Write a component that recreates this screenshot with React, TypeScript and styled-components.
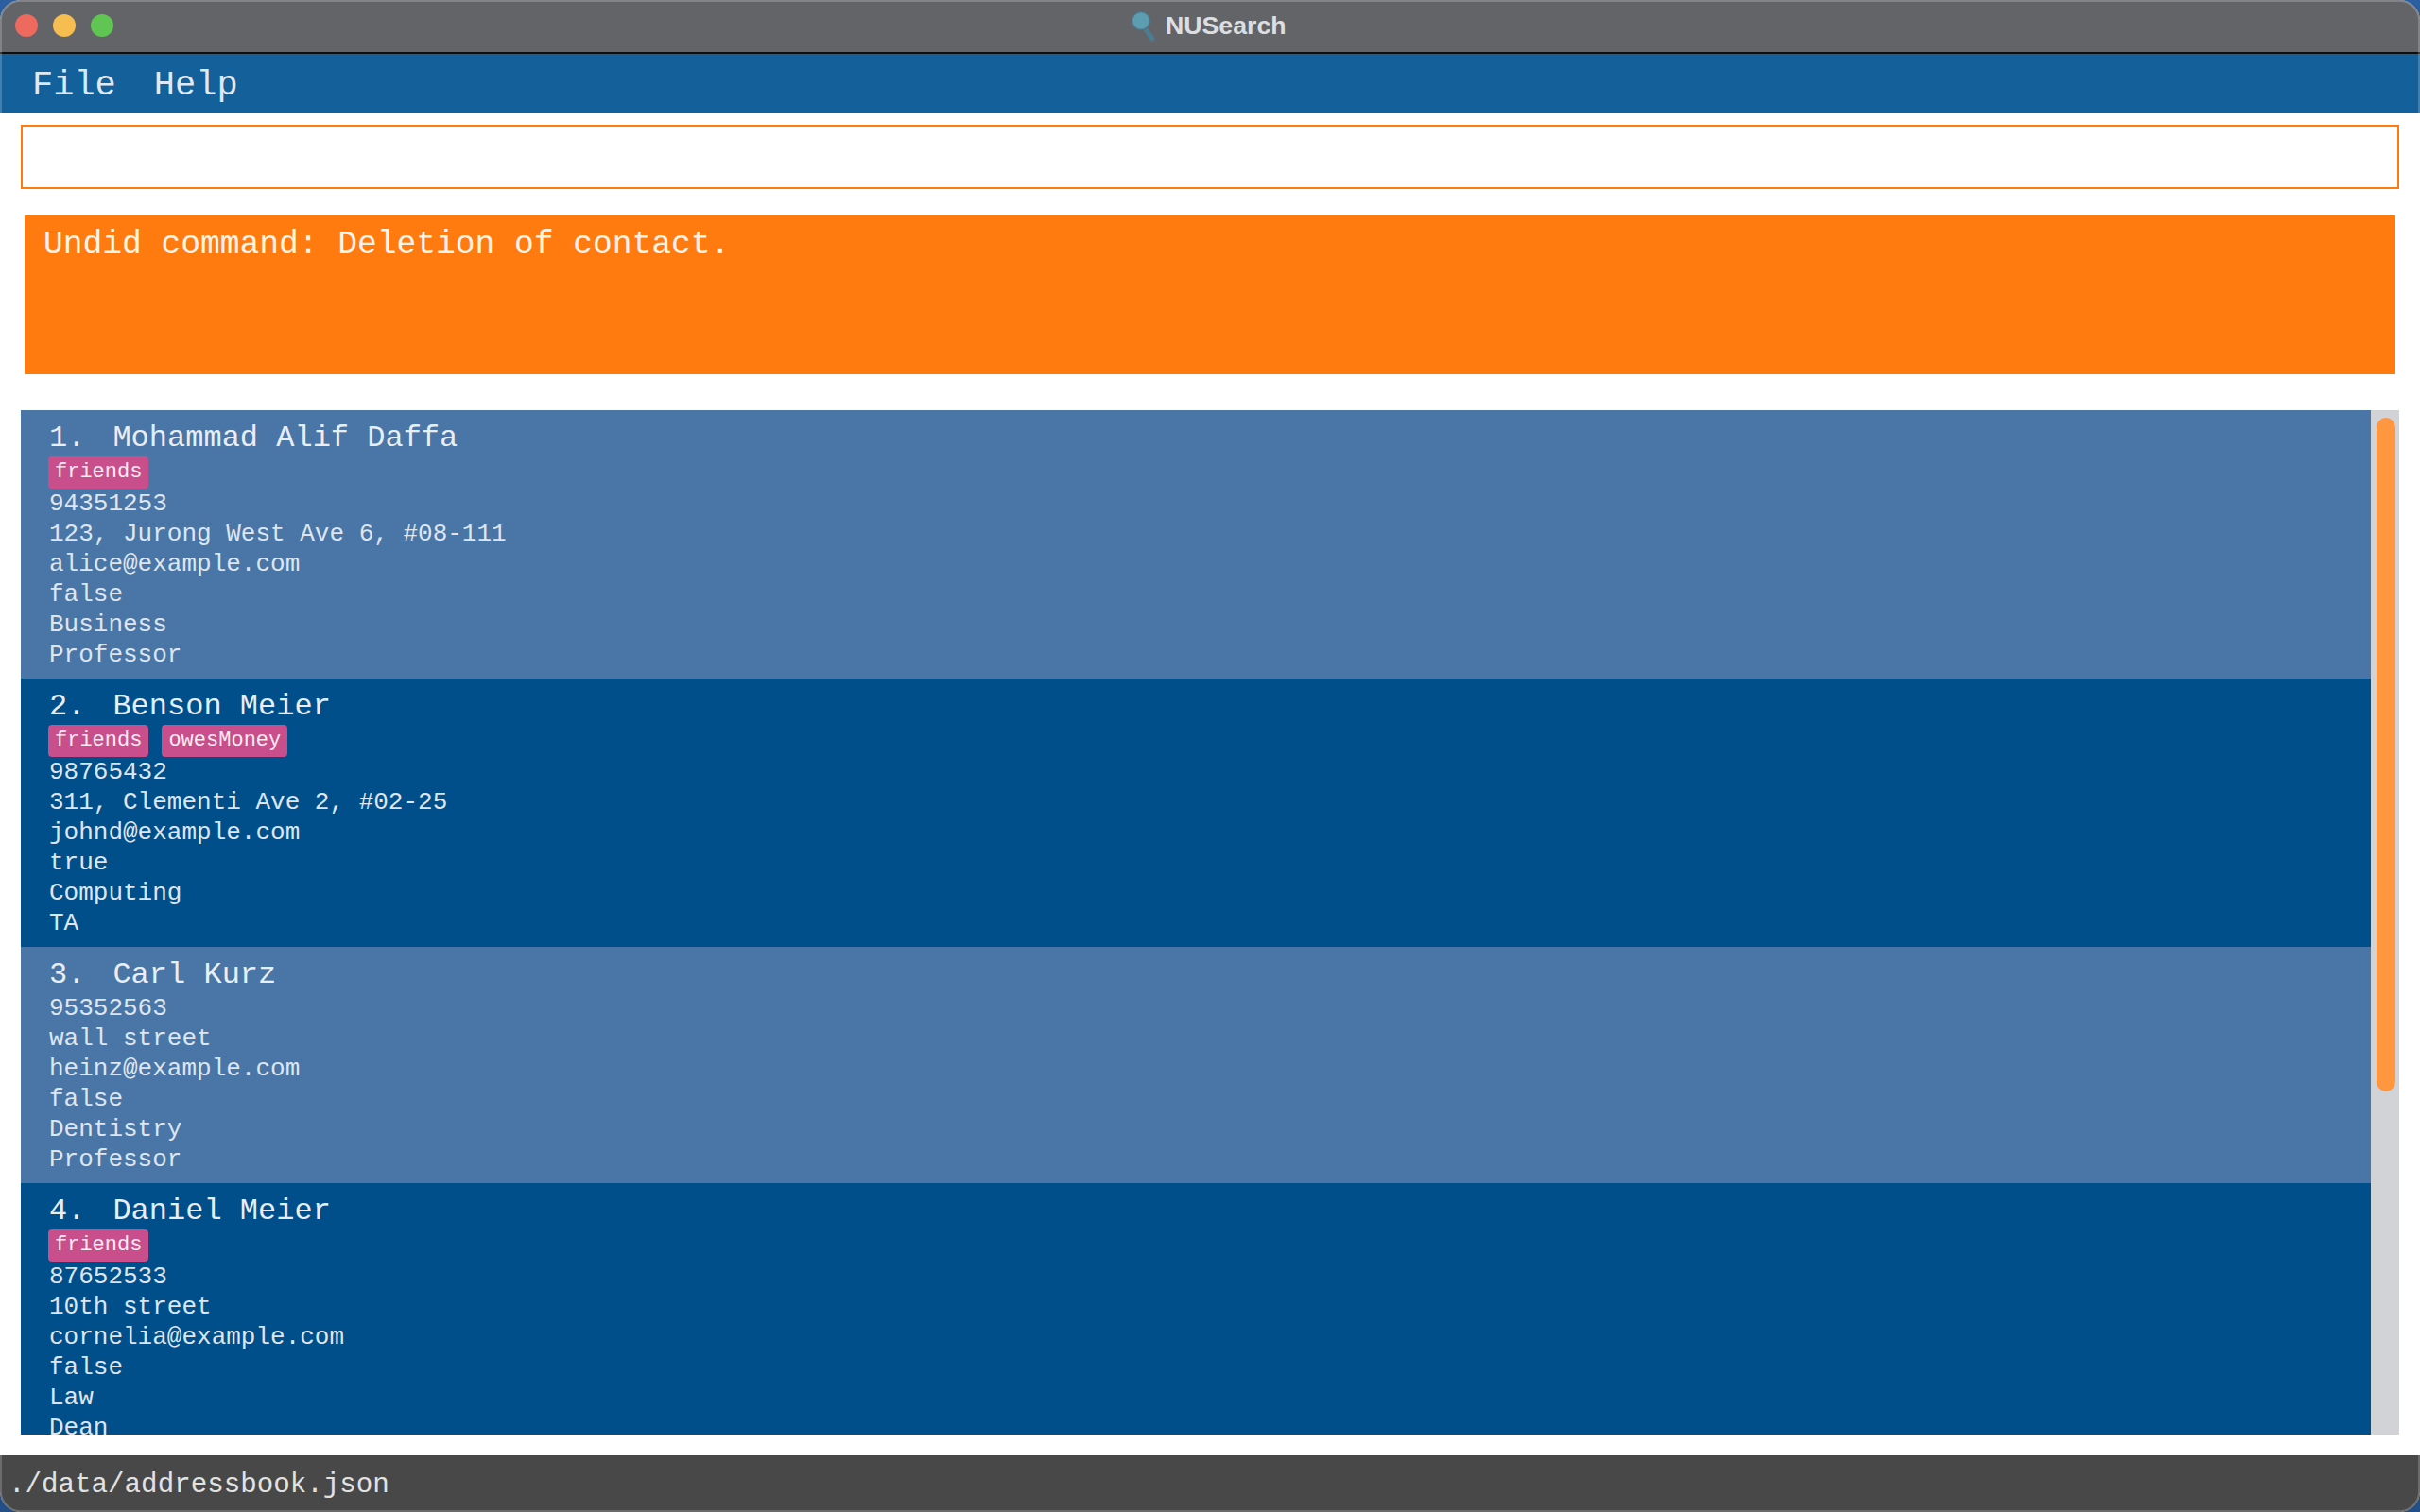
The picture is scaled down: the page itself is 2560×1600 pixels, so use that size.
import React from "react";
import styled, { createGlobalStyle } from "styled-components";

const Global = createGlobalStyle`
  html, body { margin: 0; padding: 0; background: #2a5c9e; }
  * { box-sizing: border-box; }
`;

const mono = `"Liberation Mono", "Courier New", monospace`;

const Desktop = styled.div`
  width: 2560px;
  height: 1600px;
  background: linear-gradient(180deg, #2b5f9f, #234f86);
`;

const Window = styled.div`
  position: relative;
  width: 2560px;
  height: 1600px;
  border-radius: 22px;
  overflow: hidden;
  display: flex;
  flex-direction: column;
  background: #fff;
  font-family: ${mono};
  &::after {
    content: "";
    position: absolute;
    inset: 0;
    border-radius: 22px;
    border: 2px solid rgba(255, 255, 255, 0.2);
    pointer-events: none;
  }
`;

const TitleBar = styled.div`
  flex: 0 0 57px;
  display: flex;
  align-items: center;
  padding: 0 16px 1px;
  background: #626468;
  border-bottom: 2px solid #0c0f12;
  position: relative;
`;

const Lights = styled.div`
  display: flex;
  gap: 16px;
`;

const Light = styled.span<{ $c: string }>`
  width: 24px;
  height: 24px;
  border-radius: 50%;
  background: ${(p) => p.$c};
`;

const TitleGroup = styled.div`
  position: absolute;
  left: 1196px;
  top: 9px;
  display: flex;
  align-items: center;
  gap: 9px;
`;

const TitleText = styled.span`
  font: 700 26.7px "Liberation Sans", Arial, sans-serif;
  color: #dcdee2;
`;

const MenuBar = styled.div`
  flex: 0 0 63px;
  display: flex;
  align-items: center;
  gap: 40px;
  padding: 2px 0 0 34px;
  background: #13609a;
  color: #dfe9f3;
  font-size: 37px;
`;

const Content = styled.div`
  flex: 1;
  min-height: 0;
  display: flex;
  flex-direction: column;
  padding: 12px 22px 22px;
`;

const CommandBox = styled.div`
  flex: 0 0 68px;
  border: 2px solid #ff7b0f;
  background: #fff;
`;

const ResultBox = styled.div`
  flex: 0 0 168px;
  margin: 28px 4px 38px;
  padding: 10px 20px;
  background: #ff7b0f;
  color: #fff3e8;
  font-size: 34.6px;
  line-height: 42px;
`;

const ListArea = styled.div`
  flex: 1;
  min-height: 0;
  display: flex;
`;

const Rows = styled.div`
  flex: 1;
  min-width: 0;
  overflow: hidden;
`;

const Row = styled.div<{ $odd: boolean }>`
  padding: 0 30px 10px;
  background: ${(p) => (p.$odd ? "#4a75a7" : "#004f8a")};
  color: #dde6ef;
`;

const NameLine = styled.div`
  height: 48px;
  padding-top: 10px;
  display: flex;
  align-items: center;
  gap: 29px;
  font-size: 32px;
  color: #e8eef4;
`;

const Tags = styled.div`
  display: flex;
  gap: 15px;
  margin: 1px 0 -1px;
`;

const Tag = styled.span`
  height: 34px;
  margin-left: -1px;
  padding: 0 7px;
  border-radius: 4px;
  background: #c84f8c;
  color: #fbeaf2;
  font-size: 22px;
  line-height: 34px;
`;

const Detail = styled.div`
  height: 32px;
  font-size: 26px;
  line-height: 34px;
`;

const Track = styled.div`
  flex: 0 0 30px;
  padding: 8px 4px 0 6px;
  background: #d2d3d7;
`;

const Thumb = styled.div`
  height: 713px;
  border-radius: 10px;
  background: #ff9640;
`;

const StatusBar = styled.div`
  flex: 0 0 60px;
  display: flex;
  align-items: center;
  padding: 3px 9px 0;
  background: #484848;
  color: #e2e2e2;
  font-size: 29.2px;
`;

const contacts = [
  { name: "Mohammad Alif Daffa", tags: ["friends"], lines: ["94351253", "123, Jurong West Ave 6, #08-111", "alice@example.com", "false", "Business", "Professor"] },
  { name: "Benson Meier", tags: ["friends", "owesMoney"], lines: ["98765432", "311, Clementi Ave 2, #02-25", "johnd@example.com", "true", "Computing", "TA"] },
  { name: "Carl Kurz", tags: [], lines: ["95352563", "wall street", "heinz@example.com", "false", "Dentistry", "Professor"] },
  { name: "Daniel Meier", tags: ["friends"], lines: ["87652533", "10th street", "cornelia@example.com", "false", "Law", "Dean"] },
];

const Magnifier = () => (
  <svg width="28" height="36" viewBox="0 0 28 36">
    <line x1="16" y1="22" x2="23" y2="32" stroke="#4c7c90" strokeWidth="5" strokeLinecap="round" />
    <circle cx="11" cy="13" r="9.5" fill="#5c9db2" stroke="#4f7486" strokeWidth="1.5" />
  </svg>
);

export default function App() {
  return (
    <Desktop>
      <Global />
      <Window>
        <TitleBar>
          <Lights>
            <Light $c="#ee6a5f" />
            <Light $c="#f6bd50" />
            <Light $c="#61c554" />
          </Lights>
          <TitleGroup>
            <Magnifier />
            <TitleText>NUSearch</TitleText>
          </TitleGroup>
        </TitleBar>
        <MenuBar>
          <span>File</span>
          <span>Help</span>
        </MenuBar>
        <Content>
          <CommandBox />
          <ResultBox>Undid command: Deletion of contact.</ResultBox>
          <ListArea>
            <Rows>
              {contacts.map((c, i) => (
                <Row key={c.name} $odd={i % 2 === 0}>
                  <NameLine>
                    <span>{i + 1}.</span>
                    <span>{c.name}</span>
                  </NameLine>
                  {c.tags.length > 0 && (
                    <Tags>
                      {c.tags.map((t) => (
                        <Tag key={t}>{t}</Tag>
                      ))}
                    </Tags>
                  )}
                  {c.lines.map((l) => (
                    <Detail key={l}>{l}</Detail>
                  ))}
                </Row>
              ))}
            </Rows>
            <Track>
              <Thumb />
            </Track>
          </ListArea>
        </Content>
        <StatusBar>./data/addressbook.json</StatusBar>
      </Window>
    </Desktop>
  );
}
